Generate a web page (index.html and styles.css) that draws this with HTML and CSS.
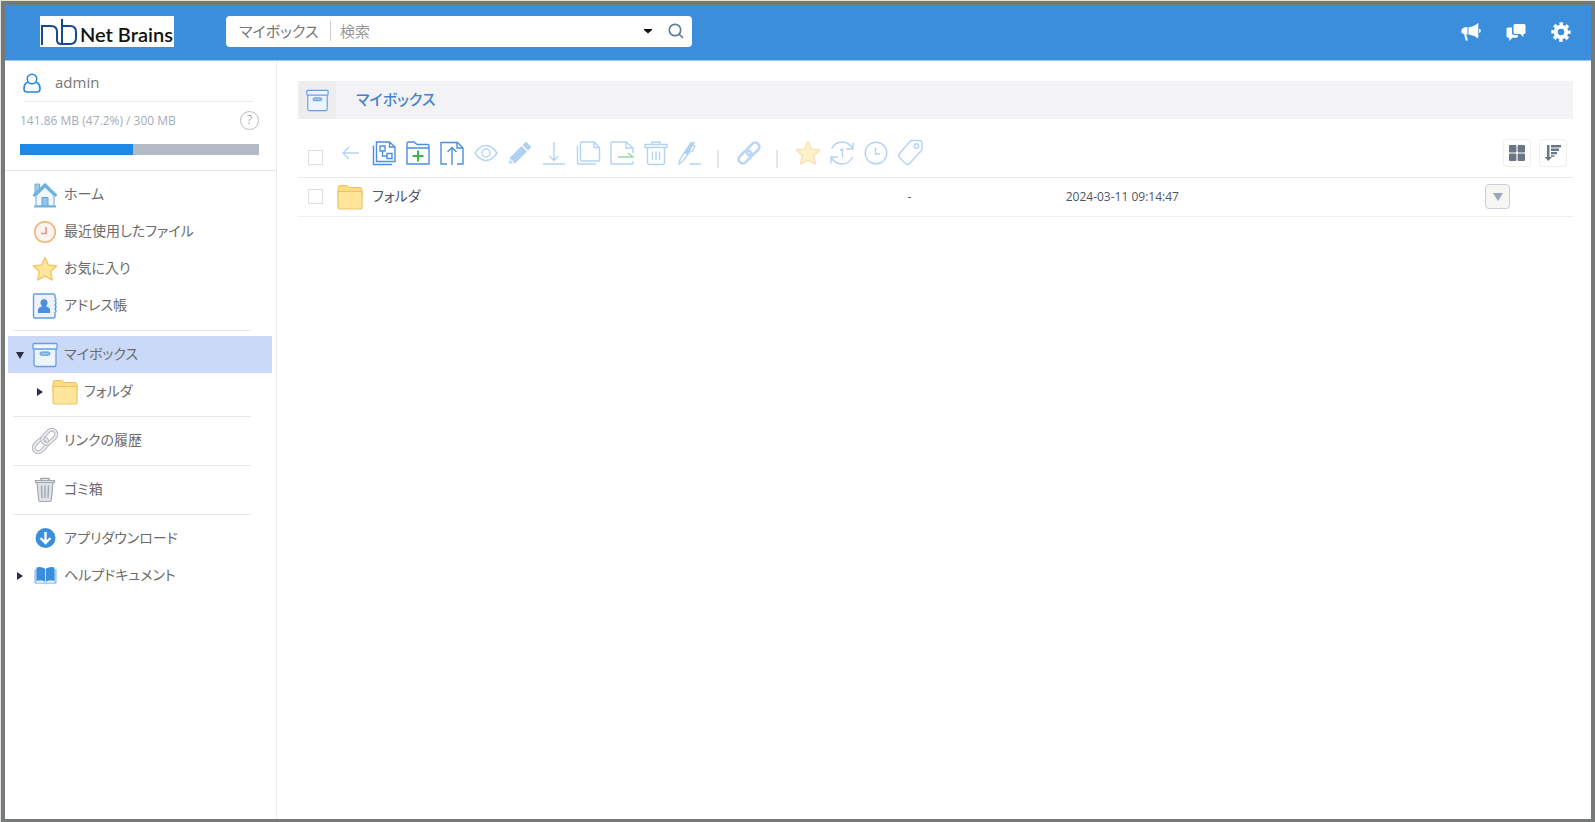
FILE: index.html
```html
<!DOCTYPE html>
<html lang="ja">
<head>
<meta charset="utf-8">
<title>マイボックス</title>
<link rel="stylesheet" href="styles.css">
</head>
<body>
<svg class="defs" aria-hidden="true">
  <symbol id="box" viewBox="0 0 26 26">
    <path d="M2 6h22v16.500a2 2 0 0 1-2 2H4a2 2 0 0 1-2-2z" fill="#eef4fb" stroke="#64a0e4" stroke-width="1.300"/>
    <rect x="1" y="1.500" width="24" height="5.500" rx="1" fill="#eef6fd" stroke="#64a0e4" stroke-width="1.300"/>
    <rect x="8" y="10" width="10" height="3.200" rx="1.600" fill="#9cc4ee" stroke="#5293e0"/>
  </symbol>
  <symbol id="folder" viewBox="0 0 26 26">
    <path d="M1 3.500A2 2 0 0 1 3 1.500h6.500c1.500 0 2 2 3.500 2h10a2 2 0 0 1 2 2V12H1z" fill="#fbdc82" stroke="#ecc465"/>
    <path d="M1 7.500h24V23a2 2 0 0 1-2 2H3a2 2 0 0 1-2-2z" fill="#ffe69b" stroke="#ecc465" stroke-width="1.200"/>
  </symbol>
  <symbol id="star" viewBox="0 0 26 26">
    <path d="M13 1.500l3.200 7.400 8.600 1-6.200 5.500 1.700 8.600-7.300-3.800-7.300 3.800 1.700-8.600-6.200-5.500 8.600-1z" fill="#ffe699" stroke="#f2c96f" stroke-width="1.500" stroke-linejoin="round"/>
  </symbol>
  <symbol id="link" viewBox="0 0 26 26">
    <g transform="rotate(-45 13 13)" fill="none" stroke="currentColor">
      <rect x="-1" y="8.500" width="16" height="9" rx="4.500" stroke-width="3"/>
      <rect x="11" y="8.500" width="16" height="9" rx="4.500" stroke-width="3"/>
    </g>
  </symbol>
</svg>
<div class="window">
  <header class="top">
    <a class="logo" href="#" aria-label="Net Brains">
      <svg class="logo-mark" viewBox="0 0 38 30" fill="none" stroke="#164a8c" stroke-width="2">
        <path d="M2 28V9h9c5 0 6 3 6 6v8c0 3 2 4 4 4h9c4 0 6-2 6-6v-6c0-4-2-6-6-6h-7M22 2v25"/>
      </svg>
      <span>Net Brains</span>
    </a>
    <form class="search" role="search">
      <label class="scope" for="q">マイボックス</label>
      <input id="q" type="text" placeholder="検索">
      <button type="button" class="drop" aria-label="検索オプション"><svg viewBox="0 0 10 6"><path d="M1 1h8v1L5 5.500 1 2z" fill="#111"/></svg></button>
      <button type="button" class="go" aria-label="検索"><svg viewBox="0 0 16 16" fill="none" stroke="#5f7d9b" stroke-width="1.700"><circle cx="7" cy="7" r="5.700"/><path d="M11 11l4 4"/></svg></button>
    </form>
    <nav class="top-icons" aria-label="メニュー">
      <button type="button" aria-label="お知らせ"><svg viewBox="0 0 20 20" fill="#fff"><path d="M7.500 5.200Q13.500 4.500 17.300 1v15.500Q13 13 7.500 12.500zM6.500 5v7.600H5.200L7 18.600H4.600L3.200 12.300Q0 11.500.2 9T3 5.400zM18.200 6.600q1.600.3 1.600 2.200t-1.600 2.300z"/></svg></button>
      <button type="button" aria-label="チャット"><svg viewBox="0 0 20 20" fill="#fff"><path d="M2 5.500h4V11q0 2 2 2h4v1q0 1.800-1.800 1.800H6.500L3.200 19v-3.300H2Q.5 15.700.5 14V7Q.500 5.500 2 5.500zM9 2h9q1.500 0 1.500 1.500v7q0 1.500-1.500 1.500h-.6v3L14.200 12H9q-1.500 0-1.500-1.500v-7Q7.500 2 9 2z"/></svg></button>
      <button type="button" aria-label="設定"><svg viewBox="0 0 20 20"><circle cx="10" cy="10" r="5.300" fill="none" stroke="#fff" stroke-width="4"/><circle cx="10" cy="10" r="8.300" fill="none" stroke="#fff" stroke-width="2.800" stroke-dasharray="3.560 2.960" stroke-dashoffset="1.780"/></svg></button>
    </nav>
  </header>
  <div class="body">
    <aside class="side">
      <section class="account">
        <div class="user">
          <svg viewBox="0 0 18 20" fill="none" stroke="#1e88e5" stroke-width="1.600"><circle cx="9" cy="6" r="4.700"/><path d="M4.700 9.200Q1 10.500 1 15.500q0 3.500 3 3.500h10q3 0 3-3.500 0-5-3.700-6.300"/></svg>
          <span>admin</span>
        </div>
        <div class="quota">
          <span>141.86 MB (47.2%) / 300 MB</span>
          <button type="button" class="help">?</button>
        </div>
        <div class="bar"><div class="fill" style="width:47.2%"></div></div>
      </section>
      <nav class="tree">
        <a class="item" href="#"><i></i><svg viewBox="0 0 26 26">
          <path d="M3 2h4.500v6L3 12z" fill="#9bcbe9" stroke="#6eb0da"/>
          <path d="M4 13.500L13 5l9 8.500V24H4z" fill="#f0f6fb" stroke="#7db9df" stroke-width="1.200"/>
          <path d="M10 15.500h6V24h-6z" fill="#93c3e8" stroke="#5fa4d6"/>
          <path d="M1.500 14L13 2.800 24.500 14" fill="none" stroke="#70b1db" stroke-width="3"/><path d="M2 24.500h22" stroke="#70b1db" stroke-width="2"/></svg><span>ホーム</span></a>
        <a class="item" href="#"><i></i><svg viewBox="0 0 26 26"><circle cx="13" cy="13" r="10.300" fill="#f8f4f1" stroke="#f4b06e" stroke-width="1.500"/><path d="M14 8v6.500H9" fill="none" stroke="#ec9278" stroke-width="1.600"/></svg><span>最近使用したファイル</span></a>
        <a class="item" href="#"><i></i><svg><use href="#star"/></svg><span>お気に入り</span></a>
        <a class="item" href="#"><i></i><svg viewBox="0 0 26 26"><path d="M2.500 1h19q1.500 0 1.500 1.500V5q2 1.500 0 3 2 2 0 4 2 2 0 4 2 2 0 4v3q0 2-1.500 2h-19Q1.500 25 1.500 23.500v-21Q1.500 1 2.500 1z" fill="#eef3fb" stroke="#659fe2" stroke-width="1.400"/><path d="M6 20v-3q0-3 4-3.500Q8 11 8.500 8.500 9.500 6 12 6t3.500 2.500Q16 11 14 13.500q4 .5 4 3.500v3z" fill="#4f90de"/></svg><span>アドレス帳</span></a>
        <hr>
        <a class="item current" href="#"><i><svg viewBox="0 0 8 8"><path d="M0 1h8L4 8z" fill="#2b2d45"/></svg></i><svg><use href="#box"/></svg><span>マイボックス</span></a>
        <a class="item child" href="#"><i><svg viewBox="0 0 8 8"><path d="M1 0v8l6-4z" fill="#2b2d45"/></svg></i><svg><use href="#folder"/></svg><span>フォルダ</span></a>
        <hr>
        <a class="item" href="#"><i></i><svg viewBox="0 0 26 26"><g transform="rotate(-45 13 13)" fill="none"><rect x="-1" y="8.500" width="16" height="9" rx="4.500" stroke="#b4b7be" stroke-width="4"/><rect x="-1" y="8.500" width="16" height="9" rx="4.500" stroke="#eceef1" stroke-width="2"/><rect x="11" y="8.500" width="16" height="9" rx="4.500" stroke="#b4b7be" stroke-width="4"/><rect x="11" y="8.500" width="16" height="9" rx="4.500" stroke="#eceef1" stroke-width="2"/></g></svg><span>リンクの履歴</span></a>
        <hr>
        <a class="item" href="#"><i></i><svg viewBox="0 0 26 26" stroke="#a0a7af" stroke-width="1.200"><path d="M5 5.500h16l-1.600 17q-.2 2-2 2H8.600q-1.800 0-2-2z" fill="#dfe3e8"/><path d="M9 3.500v-2h8v2" fill="none" stroke-width="1.500"/><path d="M3.500 3.500h19v2h-19z" fill="#dfe3e8"/><path d="M9.500 8.500l.5 12.500M13 8.500V21M16.500 8.500L16 21" fill="none" stroke-width="1.400"/></svg><span>ゴミ箱</span></a>
        <hr>
        <a class="item" href="#"><i></i><svg viewBox="0 0 26 26"><circle cx="13.500" cy="12" r="10" fill="#3b8edc"/><path d="M13.500 6v11M8.500 12l5 5 5-5" fill="none" stroke="#fff" stroke-width="2.400"/></svg><span>アプリダウンロード</span></a>
        <a class="item" href="#"><i><svg viewBox="0 0 8 8"><path d="M1 0v8l6-4z" fill="#2b2d45"/></svg></i><svg viewBox="0 0 26 26"><path d="M3 6h21v14.500H3z" fill="#c4def5"/><path d="M4.500 4.500Q9 3 13 5.500v13q-4-2-8.500-.7zM14 5.500q4-2.500 8.500-1v13.300q-4.500-1.300-8.500.7z" fill="#3b8edc"/><path d="M3 6.500V20h9l1.500 1 1.500-1h9V6.500" fill="none" stroke="#7eb6e8"/><path d="M5 19h7M15 19h7" stroke="#fff"/></svg><span>ヘルプドキュメント</span></a>
      </nav>
    </aside>
    <main class="main">
      <div class="crumb"><span class="crumb-icon"><svg><use href="#box"/></svg></span><h1>マイボックス</h1></div>
      <div class="tools">
        <input class="check" type="checkbox" aria-label="すべて選択">
        <div class="group first">
          <button type="button" class="off" aria-label="戻る"><svg viewBox="0 0 24 24"><path d="M21 12H5M11 6l-6 6 6 6"/></svg></button>
          <button type="button" aria-label="テンプレート"><svg viewBox="0 0 24 24"><path d="M4.500 1h13L23 6v14.500H4.500zM17.500 1v5H23M1.500 4.500v19H20"/><path d="M8 5h5v5H8zM10.500 10v5H15M15 12.500h5v5h-5z"/></svg></button>
          <button type="button" aria-label="新規フォルダ"><svg viewBox="0 0 24 24"><path d="M1 23V2.500Q1 1 2.500 1H8l3 2.500h10.500Q23 3.500 23 5v18zM1 7h22"/><path d="M12 9.500v11M6.500 15h11" stroke="#3bb84b" stroke-width="2"/></svg></button>
          <button type="button" aria-label="アップロード"><svg viewBox="0 0 24 24"><path d="M7 23H1V1.500h16.500L23 7v16h-6M17 1.500V7h6M12 24V6.500M7.500 11L12 6.500l4.500 4.500"/></svg></button>
          <button type="button" class="off" aria-label="プレビュー"><svg viewBox="0 0 24 24"><path d="M1 12Q6 4.500 12 4.500T23 12Q18 19.500 12 19.500T1 12z"/><circle cx="12" cy="12" r="4"/></svg></button>
          <button type="button" class="off" aria-label="編集"><svg viewBox="0 0 24 24"><path d="M1 22.500l1-6L13.500 5l5.500 5.500L7.500 22z" fill="#b0d0f4" stroke="none"/><path d="M14.500 4l2.500-2.500q1-1 2 0L22.500 5q1 1 0 2L20 9.500z" fill="#b0d0f4" stroke="none"/><path d="M2.500 18.500l3 3" stroke="#fff"/></svg></button>
          <button type="button" class="off" aria-label="ダウンロード"><svg viewBox="0 0 24 24"><path d="M12 1v18M7.500 15l4.500 4.500 4.500-4.500M1 23h22"/></svg></button>
          <button type="button" class="off" aria-label="コピー"><svg viewBox="0 0 24 24"><path d="M5.500 1H18l5.500 5.500V20h-18q-1 0-1-1V2q0-1 1-1zM18 1v5.500h5.500M1.500 5v16.500q0 1.500 1.500 1.500h17"/></svg></button>
          <button type="button" class="off" aria-label="移動"><svg viewBox="0 0 24 24"><path d="M23 20v2q0 1-1 1H2q-1 0-1-1V2q0-1 1-1h14l7 6v5M16 1v6h7"/><path d="M8 16h15l-5-4" stroke="#9ad7a5"/></svg></button>
          <button type="button" class="off" aria-label="削除"><svg viewBox="0 0 24 24"><path d="M1 3.500h22v3H1zM8 3.500V1h8v2.500M3.500 6.500v15q0 2 2 2h13q2 0 2-2v-15M8.500 10.500v8.500M12 10.500V19M15.500 10.500V19"/></svg></button>
          <button type="button" class="off" aria-label="名前の変更"><svg viewBox="0 0 24 24"><path d="M9.500 6.500L2 18.500 1 23l4-3L13 9M9 8l4-6.500"/><path d="M12.500 1.500L17 1l-7.500 13-3.500-2z" fill="#b0d0f4" stroke="none"/><path d="M15 4l2 1-3 6M11.500 23H23"/></svg></button>
        </div>
        <span class="bar-sep"></span>
        <button type="button" class="off" aria-label="リンク"><svg class="thick"><use href="#link"/></svg></button>
        <span class="bar-sep"></span>
        <div class="group marks">
          <button type="button" class="pale" aria-label="お気に入り"><svg><use href="#star"/></svg></button>
          <button type="button" class="off" aria-label="バージョン"><svg viewBox="0 0 24 24"><path d="M1.500 8Q5 1 12 1q6.500 0 10.500 6M23 1.500v6.500h-7M22.500 16Q19 23 12 23q-6.500 0-10.500-6M1 22.500V16h7M10 9.500l2.500-1.500v8.500"/></svg></button>
          <button type="button" class="off" aria-label="履歴"><svg viewBox="0 0 24 24"><circle cx="12" cy="12" r="10.800"/><path d="M11.500 6.500V13H16"/></svg></button>
          <button type="button" class="off" aria-label="タグ"><svg viewBox="0 0 24 24"><path d="M14.500-.5h7Q24-.5 24 2v5.500q0 1.500-1 2.500L11.500 22.500q-2 2-4 0l-6-6q-2-2 0-4L12 .5q1-1 2.500-1z"/><circle cx="18.500" cy="5" r="2.200"/></svg></button>
        </div>
        <div class="views">
          <button type="button" aria-label="グリッド表示"><svg viewBox="0 0 16 16"><rect width="7.400" height="7.400" rx="1"/><rect x="8.600" width="7.400" height="7.400" rx="1"/><rect y="8.600" width="7.400" height="7.400" rx="1"/><rect x="8.600" y="8.600" width="7.400" height="7.400" rx="1"/></svg></button>
          <button type="button" aria-label="並べ替え"><svg viewBox="0 0 16 16"><path d="M2 0h2.500v12H7l-3.700 4-3.700-4H2zM6 0h10v2.500H6zM6 3.500h8V6H6zM6 7h6v2.200H6zM6 10.200h3.500v1.600H6z"/></svg></button>
        </div>
      </div>
      <table class="files">
        <tr>
          <td class="c-check"><input class="check" type="checkbox" aria-label="フォルダを選択"></td>
          <td><a class="name" href="#"><svg><use href="#folder"/></svg><span>フォルダ</span></a></td>
          <td class="c-mid">-</td>
          <td class="c-mid">2024-03-11 09:14:47</td>
          <td class="c-act"><button type="button" class="more" aria-label="操作"><svg viewBox="0 0 10 8"><path d="M0 0h10L5 8z" fill="#98a6ba"/></svg></button></td>
        </tr>
      </table>
    </main>
  </div>
</div>
</body>
</html>
```
FILE: styles.css
```css
* { box-sizing: border-box; }
html, body { height: 100%; }
body {
  margin: 0;
  background: #dfe4df;
  padding: 1px 0 0 1px;
  font-family: "Open Sans", "Noto Sans CJK JP", sans-serif;
  font-feature-settings: "palt";
  font-size: 14px;
  color: #6b6b6b;
}
button, input { font: inherit; font-feature-settings: inherit; color: inherit; }
button { display: flex; align-items: center; justify-content: center; border: 0; padding: 0; background: none; }
a { color: inherit; text-decoration: none; }
svg { display: block; flex: none; }
.defs { position: absolute; width: 0; height: 0; }

.window {
  display: flex;
  flex-direction: column;
  min-height: 100%;
  border: 4px solid #767977;
  border-bottom-width: 3px;
  background: #fff;
}

.top {
  display: flex;
  align-items: center;
  height: 56px;
  padding: 0 20px 2px 35px;
  background: #3b8edc;
  border-bottom: 1px solid #a5caee;
}
.logo {
  display: flex;
  align-items: center;
  gap: 2px;
  width: 134px;
  height: 31px;
  background: #fff;
  color: #111;
  font: 600 20px Lato, sans-serif;
  white-space: nowrap;
}
.logo span { padding-top: 5px; }
.logo-mark { width: 38px; height: 30px; }
.search {
  display: flex;
  align-items: center;
  width: 466px;
  height: 31px;
  margin-left: 52px;
  padding: 0 2px 2px 13px;
  background: #fff;
  border-radius: 4px;
  font-size: 15px;
}
.scope { width: 92px; line-height: 20px; border-right: 1px solid #ccc; color: #777; }
.search input { flex: 1; min-width: 0; border: 0; outline: 0; padding: 0 9px; background: none; }
.search input::placeholder { color: #999; }
.drop { width: 28px; height: 24px; }
.drop svg { width: 10px; height: 6px; }
.go { width: 28px; height: 24px; }
.go svg { width: 16px; height: 16px; }
.top-icons { display: flex; gap: 25px; margin-left: auto; }
.top-icons svg { width: 20px; height: 20px; }

.body { display: flex; flex: 1; }
.side { width: 272px; flex: none; border-right: 1px solid #ececf0; }
.account { height: 110px; padding: 0 17px 0 15px; border-bottom: 1px solid #e6e6ea; }
.user {
  display: flex;
  align-items: center;
  gap: 14px;
  height: 41px;
  margin: 0 5px 0 3px;
  padding-top: 4px;
  border-bottom: 1px solid #ececec;
  font-size: 15px;
  color: #777;
}
.user svg { width: 18px; height: 20px; }
.user span { padding-bottom: 2px; }
.quota { display: flex; align-items: center; justify-content: space-between; height: 36px; color: #a3adba; font-size: 12px; }
.help { width: 19px; height: 19px; border: 1px solid #bbb; border-radius: 50%; color: #aaa; font-size: 12px; line-height: 16px; }
.bar { height: 11px; margin-top: 6px; background: #b3bbc6; }
.fill { height: 100%; background: #1e88e5; }

.tree { padding: 5px 4px 0 3px; }
.tree hr { margin: 6px 21px 5px 5px; border: 0; border-top: 1px solid #e6e9ee; }
.item { display: flex; align-items: center; height: 37px; padding-left: 8px; }
.item span { padding-bottom: 3px; }
.item i { width: 16px; }
.item i svg { width: 8px; height: 8px; }
.item > svg { width: 26px; height: 26px; margin-right: 6px; }
.child { padding-left: 28px; }
.current { background: #cbd9f8; }

.main { flex: 1; min-width: 0; padding: 20px 18px 0 21px; }
.crumb { display: flex; align-items: center; height: 38px; background: #f3f3f5; }
.crumb-icon { display: flex; align-items: center; justify-content: center; width: 38px; height: 38px; background: #ededed; }
.crumb svg { width: 23px; height: 23px; }
.crumb h1 { margin: 0 0 0 20px; padding-bottom: 3px; font-size: 15px; font-weight: 500; color: #4681cf; }
.tools { display: flex; align-items: center; height: 59px; padding: 9px 6px 0 10px; border-bottom: 1px solid #e8e9ee; }
.check { appearance: none; width: 15px; height: 15px; margin: 0; border: 1px solid #dedede; background: #fff; }
.tools > .check { margin-top: 9px; }
.group { display: flex; }
.first { margin-left: 10px; }
.tools button { width: 34px; height: 34px; }
.tools button svg { width: 24px; height: 24px; fill: none; stroke: #4a90e2; stroke-width: 1.4px; overflow: visible; }
.tools button.off svg { stroke: #b5d3f5; }
.tools button.off .thick { color: #bbd6f6; stroke: none; }
.tools button.pale svg { width: 26px; height: 26px; opacity: 0.5; }
.bar-sep { width: 2px; height: 18px; margin: 12px 13px 0 10px; background: #e6e6e8; }
.views { display: flex; gap: 8px; margin-left: auto; }
.tools .views button { width: 28px; height: 28px; border: 1px solid #eee; border-radius: 4px; }
.tools .views svg { width: 16px; height: 16px; fill: #6a7688; stroke: none; }

.files { width: 100%; border-collapse: collapse; table-layout: fixed; color: #4d5666; font-size: 12px; }
.files td { height: 38px; padding: 0; border-bottom: 1px solid #f0f0f0; vertical-align: middle; }
.files .c-check { width: 39px; padding-left: 10px; }
.c-check .check { display: block; }
.name { display: flex; align-items: center; gap: 9px; font-size: 14px; }
.name svg { width: 26px; height: 26px; }
.name span { padding-bottom: 3px; }
.c-mid { width: 16.7%; text-align: center; }
.files .c-act { width: 27%; padding-right: 63px; }
.more { width: 25px; height: 25px; margin-left: auto; border: 1px solid #c9d0da; border-radius: 4px; background: #f6f7f3; }
.more svg { width: 10px; height: 8px; }
```
